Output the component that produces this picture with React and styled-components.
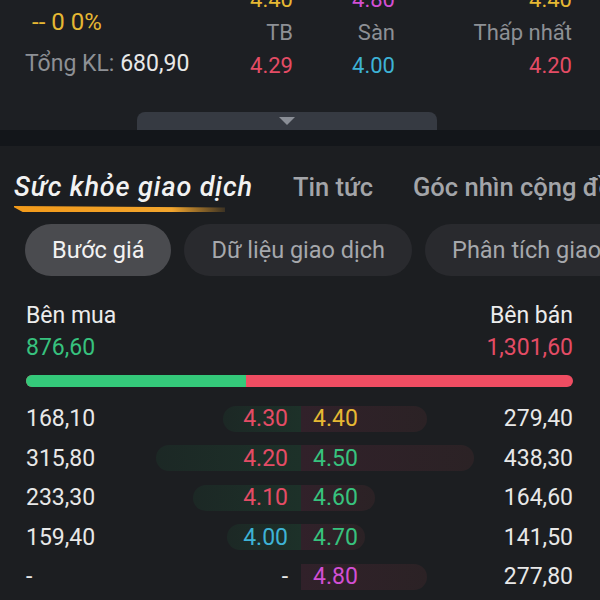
import React from "react"
import styled, { createGlobalStyle } from "styled-components"

const GlobalStyle = createGlobalStyle`
  body {
    margin: 0;
    background: #1c1e21;
    font-family: Roboto, "Noto Sans", sans-serif;
  }
`

const colors = {
  yellow: "#e6b833",
  magenta: "#d24fd4",
  red: "#e44c65",
  cyan: "#3eb3d6",
  green: "#37c27e",
  grey: "#8d9095",
  white: "#e8e8e8",
}

const Page = styled.div`
  width: 600px;
  height: 600px;
  overflow: hidden;
  background: #1c1e21;
`

const Summary = styled.section`
  height: 112px;
  overflow: hidden;
  display: flex;
  padding: 0 28px 0 25px;
  background: #1d1f23;
  font-size: 23px;
`

const SummaryLeft = styled.div`
  width: 165px;
  display: flex;
  flex-direction: column;
  padding-top: 9px;
  gap: 16px;
  white-space: nowrap;
`

const Change = styled.div`
  color: ${colors.yellow};
  padding-left: 7px;
  line-height: 26px;
  font-size: 24px;
`

const Total = styled.div`
  color: ${colors.grey};
  line-height: 26px;
  span {
    color: ${colors.white};
  }
`

const StatGrid = styled.div`
  flex: 1;
  display: grid;
  grid-template-columns: 103px 102px 1fr;
  grid-auto-rows: 33px;
  margin-top: -17px;
  align-items: center;
  text-align: right;
  font-size: 22px;
`

const Stat = styled.div`
  color: ${(p) => p.$color || colors.grey};
  white-space: nowrap;
`

const HandleRow = styled.div`
  height: 18px;
  padding-left: 137px;
  background: #1d1f23;
`

const Handle = styled.div`
  width: 300px;
  height: 18px;
  border-radius: 8px 8px 0 0;
  background: #363a42;
  display: flex;
  justify-content: center;
  padding-top: 5px;
  box-sizing: border-box;
`

const Caret = styled.div`
  width: 0;
  height: 0;
  border-left: 8px solid transparent;
  border-right: 8px solid transparent;
  border-top: 8px solid #8a8e96;
`

const Divider = styled.div`
  height: 16px;
  background: #13161a;
`

const Panel = styled.section`
  padding: 0 27px 0 26px;
  font-size: 23px;
`

const Tabs = styled.nav`
  display: flex;
  gap: 40px;
  margin: 0 -27px 0 -12px;
  padding-top: 24px;
  white-space: nowrap;
  overflow: hidden;
`

const Tab = styled.div`
  display: flex;
  flex-direction: column;
  flex-shrink: 0;
  font-size: ${(p) => (p.$active ? "27px" : "25.5px")};
  letter-spacing: ${(p) => (p.$active ? "0.9px" : "0")};
  line-height: 34px;
  color: ${(p) => (p.$active ? "#f2f2f2" : "#a3a5a9")};
  font-style: ${(p) => (p.$active ? "italic" : "normal")};
  font-weight: 500;
`

const Underline = styled.div`
  width: 213px;
  height: 6px;
  margin: 2px 0 0 -2px;
  background: linear-gradient(90deg, #f29a1a 0%, #f2a52d 75%, rgba(242, 165, 45, 0.15) 100%);
  clip-path: polygon(0 0, 100% 25%, 100% 100%, 5% 100%);
`

const Chips = styled.div`
  display: flex;
  gap: 13px;
  margin: 12px -27px 0 -1px;
  white-space: nowrap;
  overflow: hidden;
`

const Chip = styled.div`
  flex-shrink: 0;
  height: 52px;
  padding: 0 27px;
  border-radius: 26px;
  display: flex;
  align-items: center;
  font-size: 23.5px;
  color: ${(p) => (p.$active ? "#f2f2f2" : "#a6a8ac")};
  background: ${(p) => (p.$active ? "#4a4b4f" : "#292a2e")};
`

const SideHead = styled.div`
  display: flex;
  justify-content: space-between;
  margin-top: 27px;
  line-height: 26px;
`

const SideCol = styled.div`
  display: flex;
  flex-direction: column;
  gap: 6px;
  align-items: ${(p) => (p.$right ? "flex-end" : "flex-start")};
  color: #ececec;
`

const Amount = styled.div`
  color: ${(p) => p.$color};
`

const Ratio = styled.div`
  display: flex;
  height: 12px;
  margin-top: 14px;
  border-radius: 6px;
  overflow: hidden;
  background: #ef4d62;
`

const RatioFill = styled.div`
  background: #34c97a;
`

const Book = styled.div`
  margin-top: 12px;
`

const Row = styled.div`
  display: flex;
  height: 39.5px;
  align-items: center;
`

const BidSide = styled.div`
  flex: 0 0 275px;
  display: flex;
  align-items: center;
  justify-content: space-between;
`

const AskSide = styled.div`
  flex: 1;
  display: flex;
  align-items: center;
  justify-content: space-between;
`

const Volume = styled.div`
  color: ${colors.white};
`

const PriceBar = styled.div`
  height: 26px;
  display: flex;
  align-items: center;
  box-sizing: border-box;
  white-space: nowrap;
  justify-content: ${(p) => (p.$ask ? "flex-start" : "flex-end")};
  padding: ${(p) => (p.$ask ? "0 0 0 12px" : "0 13px 0 0")};
  border-radius: ${(p) => (p.$ask ? "0 13px 13px 0" : "13px 0 0 13px")};
  background: ${(p) =>
    p.$empty
      ? "transparent"
      : p.$ask
      ? "linear-gradient(90deg, #31212a, #2b2225)"
      : "linear-gradient(90deg, #1c2825, #1d3129)"};
  color: ${(p) => p.$color};
`

const summary = [
  ["4.40", colors.yellow],
  ["4.80", colors.magenta],
  ["4.40", colors.yellow],
  ["TB"],
  ["Sàn"],
  ["Thấp nhất"],
  ["4.29", colors.red],
  ["4.00", colors.cyan],
  ["4.20", colors.red],
]

const book = [
  { bidVol: "168,10", bid: "4.30", bidColor: colors.red, bidW: 78, ask: "4.40", askColor: colors.yellow, askVol: "279,40", askW: 126 },
  { bidVol: "315,80", bid: "4.20", bidColor: colors.red, bidW: 145, ask: "4.50", askColor: colors.green, askVol: "438,30", askW: 173 },
  { bidVol: "233,30", bid: "4.10", bidColor: colors.red, bidW: 108, ask: "4.60", askColor: colors.green, askVol: "164,60", askW: 74 },
  { bidVol: "159,40", bid: "4.00", bidColor: colors.cyan, bidW: 74, ask: "4.70", askColor: colors.green, askVol: "141,50", askW: 64 },
  { bidVol: "-", bid: "-", bidColor: colors.white, bidW: 0, ask: "4.80", askColor: colors.magenta, askVol: "277,80", askW: 126 },
]

function App() {
  return (
    <Page>
      <GlobalStyle />
      <Summary>
        <SummaryLeft>
          <Change>-- 0 0%</Change>
          <Total>
            Tổng KL: <span>680,90</span>
          </Total>
        </SummaryLeft>
        <StatGrid>
          {summary.map(([text, color], i) => (
            <Stat key={i} $color={color}>
              {text}
            </Stat>
          ))}
        </StatGrid>
      </Summary>
      <HandleRow>
        <Handle>
          <Caret />
        </Handle>
      </HandleRow>
      <Divider />

      <Panel>
        <Tabs>
          <Tab $active>
            Sức khỏe giao dịch
            <Underline />
          </Tab>
          <Tab>Tin tức</Tab>
          <Tab>Góc nhìn cộng đồng</Tab>
        </Tabs>

        <Chips>
          <Chip $active>Bước giá</Chip>
          <Chip>Dữ liệu giao dịch</Chip>
          <Chip>Phân tích giao dịch</Chip>
        </Chips>

        <SideHead>
          <SideCol>
            Bên mua
            <Amount $color={colors.green}>876,60</Amount>
          </SideCol>
          <SideCol $right>
            Bên bán
            <Amount $color={colors.red}>1,301,60</Amount>
          </SideCol>
        </SideHead>

        <Ratio>
          <RatioFill style={{ width: `${(876.6 / (876.6 + 1301.6)) * 100}%` }} />
        </Ratio>

        <Book>
          {book.map((r, i) => (
            <Row key={i}>
              <BidSide>
                <Volume>{r.bidVol}</Volume>
                <PriceBar $color={r.bidColor} $empty={!r.bidW} style={{ width: r.bidW || "auto" }}>
                  {r.bid}
                </PriceBar>
              </BidSide>
              <AskSide>
                <PriceBar $ask $color={r.askColor} style={{ width: r.askW }}>
                  {r.ask}
                </PriceBar>
                <Volume>{r.askVol}</Volume>
              </AskSide>
            </Row>
          ))}
        </Book>
      </Panel>
    </Page>
  )
}

export default App
